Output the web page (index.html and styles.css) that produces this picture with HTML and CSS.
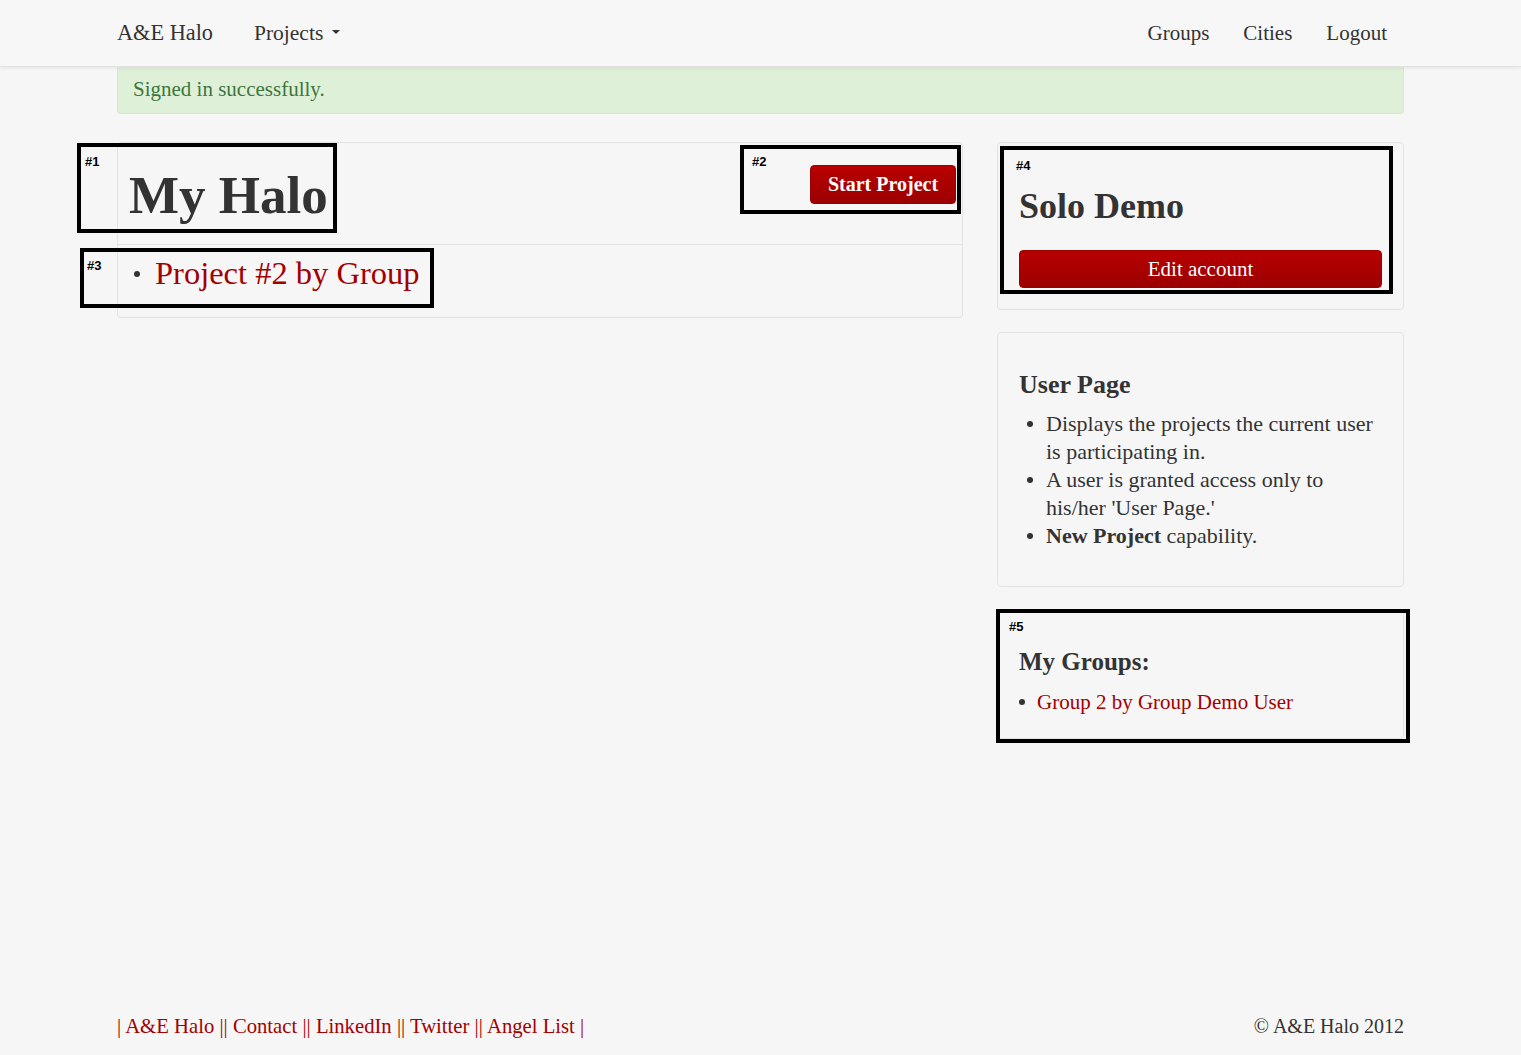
FILE: index.html
```html
<!DOCTYPE html>
<html lang="en">
<head>
<meta charset="utf-8">
<title>A&amp;E Halo</title>
<link rel="stylesheet" href="styles.css">
</head>
<body>
<div class="page">
  <nav class="navbar">
    <div class="nav-inner">
      <div class="nav-left">
        <a class="brand" href="#">A&amp;E Halo</a>
        <a class="nav-link" href="#">Projects <span class="caret"></span></a>
      </div>
      <div class="nav-right">
        <a class="nav-link" href="#">Groups</a>
        <a class="nav-link" href="#">Cities</a>
        <a class="nav-link" href="#">Logout</a>
      </div>
    </div>
  </nav>

  <main class="container">
    <div class="alert">Signed in successfully.</div>

    <div class="row">
      <section class="card halo">
        <div class="halo-head">
          <h1 class="halo-title">My Halo</h1>
          <a class="btn btn-start" href="#">Start Project</a>
        </div>
        <div class="halo-body">
          <ul class="dots big">
            <li><a href="#">Project #2 by Group</a></li>
          </ul>
        </div>
      </section>

      <aside class="side">
        <section class="card profile">
          <h2 class="profile-name">Solo Demo</h2>
          <a class="btn btn-block" href="#">Edit account</a>
        </section>

        <section class="card info">
          <h3 class="info-title">User Page</h3>
          <ul class="dots">
            <li>Displays the projects the current user is participating in.</li>
            <li>A user is granted access only to his/her 'User Page.'</li>
            <li><strong>New Project</strong> capability.</li>
          </ul>
        </section>

        <section class="card groups">
          <h3 class="groups-title">My Groups:</h3>
          <ul class="dots small">
            <li><a href="#">Group 2 by Group Demo User</a></li>
          </ul>
        </section>
      </aside>
    </div>
  </main>

  <footer class="footer">
    <div class="footer-links">| <a href="#">A&amp;E Halo</a> || <a href="#">Contact</a> || <a href="#">LinkedIn</a> || <a href="#">Twitter</a> || <a href="#">Angel List</a> |</div>
    <div class="copy">© A&amp;E Halo 2012</div>
  </footer>
</div>

<div class="mark mark1"><span class="mark-label">#1</span></div>
<div class="mark mark2"><span class="mark-label">#2</span></div>
<div class="mark mark3"><span class="mark-label">#3</span></div>
<div class="mark mark4"><span class="mark-label">#4</span></div>
<div class="mark mark5"><span class="mark-label">#5</span></div>
</body>
</html>
```

FILE: styles.css
```css
* { box-sizing: border-box; }

html, body {
  margin: 0;
  padding: 0;
}

body {
  background: #f6f6f6;
  color: #333;
  font-family: "Liberation Serif", "Times New Roman", serif;
  font-size: 21px;
  line-height: 28px;
}

a { color: #a30000; text-decoration: none; }

.page {
  min-height: 100vh;
  display: flex;
  flex-direction: column;
}

/* navbar */
.navbar {
  height: 67px;
  background: #f7f7f7;
  border-bottom: 1px solid #e2e2e2;
  box-shadow: 0 1px 4px rgba(0,0,0,0.08);
  position: relative;
  z-index: 2;
}
.nav-inner {
  width: 1287px;
  margin: 0 auto;
  height: 66px;
  display: flex;
  justify-content: space-between;
  align-items: center;
}
.nav-left, .nav-right {
  display: flex;
  align-items: center;
}
.brand {
  color: #333;
  font-size: 22.3px;
  margin-right: 41px;
}
.nav-link {
  color: #333;
  font-size: 21.5px;
}
.nav-right .nav-link { margin-left: 34px; font-size: 21px; }
.nav-right .nav-link:last-child { margin-right: 17px; }
.caret {
  display: inline-block;
  width: 0;
  height: 0;
  border-left: 4px solid transparent;
  border-right: 4px solid transparent;
  border-top: 4px solid #333;
  vertical-align: middle;
  margin-left: 3px;
  position: relative;
  top: -3px;
}

/* container */
.container {
  width: 1287px;
  margin: 0 auto;
}
.alert {
  background: #dff0d8;
  border: 1px solid #d6e9c6;
  border-top: none;
  border-radius: 0 0 4px 4px;
  color: #3c763d;
  padding: 8px 15px 10px 15px;
  height: 47px;
  line-height: 28px;
  margin-bottom: 28px;
}

.row {
  display: grid;
  grid-template-columns: 846px 407px;
  column-gap: 34px;
  align-items: start;
}

.card {
  border: 1px solid #e3e3e3;
  border-radius: 4px;
  background: #f6f6f6;
}

/* left card */
.halo-head {
  display: flex;
  justify-content: space-between;
  align-items: flex-start;
  padding: 22px 6px 20px 11px;
  border-bottom: 1px solid #e3e3e3;
}
.halo-title {
  margin: 2px 0 0 0;
  font-size: 53px;
  line-height: 57px;
  font-weight: bold;
  color: #333;
}
.btn {
  display: inline-block;
  color: #fff;
  background: linear-gradient(#b80000, #9c0000);
  border: 1px solid #990000;
  border-radius: 4px;
  text-align: center;
}
.btn-start {
  font-weight: bold;
  font-size: 20px;
  line-height: 27px;
  padding: 5px 14px 5px 14px;
  width: 146px;
}
.halo-body {
  padding: 6px 0 22px 0;
}

.dots {
  list-style: none;
  margin: 0;
  padding: 0;
}
.dots li {
  position: relative;
  padding-left: 28px;
}
.dots li::before {
  content: "";
  position: absolute;
  left: 8px;
  top: 11px;
  width: 6px;
  height: 6px;
  border-radius: 50%;
  background: #333;
}
.dots.big li {
  font-size: 32.5px;
  line-height: 44px;
  padding-left: 37px;
}
.dots.big li::before {
  left: 16px;
  top: 20px;
}

/* side */
.side {
  display: flex;
  flex-direction: column;
  gap: 22px;
}
.profile {
  padding: 21px 21px 21px 21px;
}
.profile-name {
  margin: 22px 0 24px 0;
  font-size: 36px;
  line-height: 40px;
  font-weight: bold;
}
.btn-block {
  display: block;
  font-size: 21px;
  line-height: 28px;
  padding: 4px 0;
  height: 38px;
}

.info {
  padding: 21px 21px 21px 21px;
}
.info-title {
  margin: 16px 0 11px 0;
  font-size: 26px;
  line-height: 29px;
  font-weight: bold;
}
.info .dots { margin-bottom: 15px; }
.info .dots li { padding-left: 27px; font-size: 22px; }

.groups {
  padding: 21px 21px 22px 21px;
}
.groups-title {
  margin: 17px 0 12px 0;
  font-size: 25px;
  line-height: 28px;
  font-weight: bold;
}
.dots.small li { padding-left: 18px; }
.dots.small li::before { left: 0; }

/* footer */
.footer {
  margin-top: auto;
  width: 1287px;
  margin-left: auto;
  margin-right: auto;
  display: flex;
  justify-content: space-between;
  font-size: 20px;
  line-height: 28px;
  padding-bottom: 15px;
}
.footer-links { color: #a30000; font-size: 20.7px; }
.copy { color: #333; }

/* annotation overlays */
.mark {
  position: absolute;
  border: 4px solid #000;
  pointer-events: none;
}
.mark-label {
  position: absolute;
  font-family: "Liberation Sans", Arial, sans-serif;
  font-weight: bold;
  font-size: 13px;
  line-height: 15px;
  color: #000;
}
.mark1 { left: 77px; top: 143px; width: 260px; height: 90px; }
.mark1 .mark-label { left: 4px; top: 7px; }
.mark2 { left: 740px; top: 145px; width: 221px; height: 69px; }
.mark2 .mark-label { left: 8px; top: 5px; }
.mark3 { left: 80px; top: 248px; width: 354px; height: 60px; }
.mark3 .mark-label { left: 3px; top: 6px; }
.mark4 { left: 1000px; top: 146px; width: 393px; height: 148px; }
.mark4 .mark-label { left: 12px; top: 8px; }
.mark5 { left: 996px; top: 609px; width: 414px; height: 134px; }
.mark5 .mark-label { left: 9px; top: 6px; }
```
